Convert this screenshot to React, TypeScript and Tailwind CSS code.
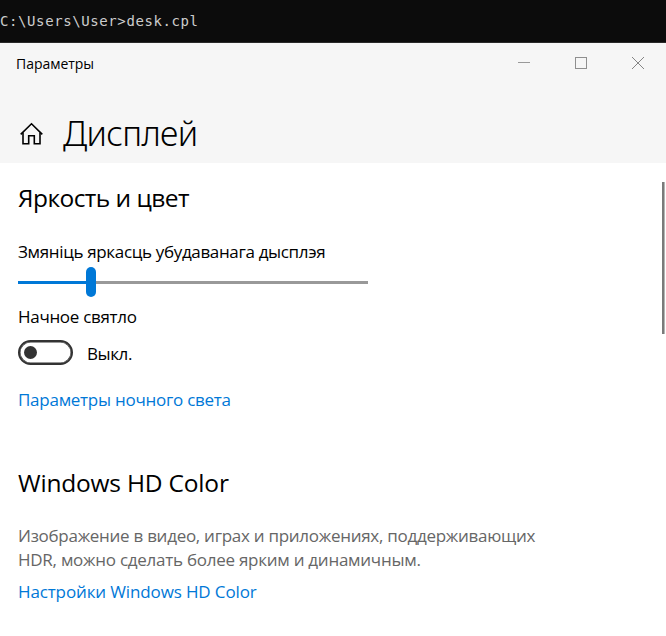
import React from "react";

function HomeIcon() {
  return (
    <svg width="24" height="24" viewBox="0 0 24 24" fill="none" stroke="#000" strokeWidth="1.6">
      <path d="M0.7 12.4 11.5 1.8l10.8 10.6" />
      <path d="M3 10.6v11.2h5.7v-8h5.6v8H20V10.6" />
    </svg>
  );
}

function WindowButtons() {
  return (
    <div className="flex gap-[45px] pr-[22px] pt-[14px]">
      <svg width="12" height="12" viewBox="0 0 12 12" shapeRendering="crispEdges">
        <rect y="5" width="12" height="1" fill="#999" />
      </svg>
      <svg width="12" height="12" viewBox="0 0 12 12" shapeRendering="crispEdges">
        <rect x="0.5" y="0.5" width="11" height="11" fill="none" stroke="#8f8f8f" />
      </svg>
      <svg width="12" height="12" viewBox="0 0 12 12">
        <path d="M0 0 12 12M12 0 0 12" stroke="#858585" />
      </svg>
    </div>
  );
}

function Slider() {
  return (
    <div className="flex h-[30px] w-[350px] items-center">
      <div className="h-[3px] w-[68px] bg-[#0078d7]" />
      <div className="h-[30px] w-[10px] rounded-full bg-[#0078d7]" />
      <div className="h-[3px] flex-1 bg-[#999]" />
    </div>
  );
}

function Toggle() {
  return (
    <div className="flex h-[25px] w-[55px] items-center rounded-full border-2 border-[#333] pl-[4px] shadow-[inset_0_0_0_0.5px_#333]">
      <div className="size-[13px] rounded-full bg-[#333]" />
    </div>
  );
}

export default function App() {
  return (
    <div className="flex h-[636px] w-[666px] flex-col overflow-hidden whitespace-nowrap bg-white font-['Open_Sans','Noto_Sans',sans-serif] text-[17px] leading-6 text-black">
      <div className="h-[43px] border-b border-[#2a2a2a] bg-[#0c0c0c] pt-[11px] font-['DejaVu_Sans_Mono',monospace] text-[14px] leading-5 tracking-[0.6px] text-[#ccc]">
        C:\Users\User&gt;desk.cpl
      </div>

      <header className="h-[120px] bg-[#f6f6f6]">
        <div className="flex h-[67px] justify-between">
          <div className="pl-[16px] pt-[11px] text-[14px] leading-5 tracking-[-0.03px]">Параметры</div>
          <WindowButtons />
        </div>
        <div className="flex items-start pl-[20px]">
          <div className="pt-[12px]"><HomeIcon /></div>
          <h1 className="ml-[19px] mt-px font-['Noto_Sans',sans-serif] text-[34px] font-light leading-[44px] tracking-[-0.65px]">Дисплей</h1>
        </div>
      </header>

      <div className="flex flex-1 justify-between">
        <main className="flex flex-col items-start pl-[18px]">
          <h2 className="mt-[19px] text-[24.5px] leading-8 tracking-[-0.55px]">Яркость и цвет</h2>
          <div className="mt-[26px] tracking-[-0.34px]">Змяніць яркасць убудаванага дысплэя</div>
          <div className="mt-[3px]"><Slider /></div>
          <div className="mt-[8px] tracking-[-0.3px]">Начное святло</div>
          <div className="mt-[11px] flex gap-[14px]">
            <Toggle />
            <div className="mt-[2px] tracking-[-0.4px]">Выкл.</div>
          </div>
          <a className="mt-[22px] tracking-[-0.26px] text-[#0078d7]">Параметры ночного света</a>
          <h2 className="mt-[55px] text-[24.5px] leading-8 tracking-[-0.2px]">Windows HD Color</h2>
          <p className="mt-[25px] text-[#666]">
            <span className="block tracking-[-0.28px]">Изображение в видео, играх и приложениях, поддерживающих</span>
            <span className="block tracking-[-0.26px]">HDR, можно сделать более ярким и динамичным.</span>
          </p>
          <a className="mt-[8px] tracking-[-0.13px] text-[#0078d7]">Настройки Windows HD Color</a>
        </main>
        <div className="mr-px mt-[19px] h-[152px] w-[3px] border-r border-[#b5b5b5] bg-[#7a7a7a]" />
      </div>
    </div>
  );
}
